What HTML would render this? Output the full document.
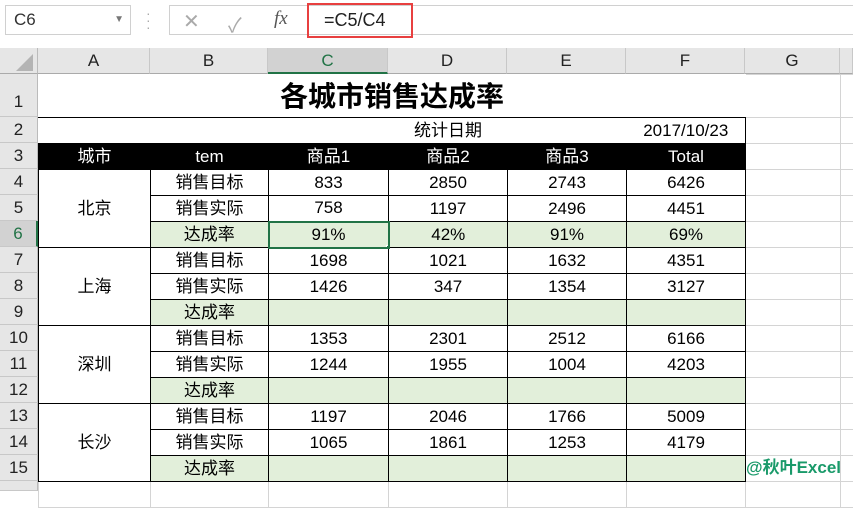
<!DOCTYPE html>
<html><head><meta charset="utf-8"><style>
*{margin:0;padding:0;box-sizing:border-box}
body{width:853px;height:484px;overflow:hidden;background:#fff;position:relative;font-family:"Liberation Sans","Noto Sans CJK SC",sans-serif;color:#000}
.a{position:absolute}
table{border-collapse:collapse;table-layout:fixed;position:absolute;left:38px;top:74px;width:822px}
td{border:1px solid #d4d4d4;text-align:center;font-size:17px;padding:0;height:26px;white-space:nowrap;overflow:hidden;line-height:24px}
td.k{border:1px solid #000}
.h td.k{background:#000;color:#fff;border-color:#000}
.g{background:#e2efda}
.rh{left:0;width:38px;background:#e6e6e6;text-align:center;font-size:17px;color:#222;border-bottom:1px solid #c8c8c8;border-right:1px solid #bbb}
.ch{top:48px;height:26px;background:#e6e6e6;text-align:center;font-size:17px;line-height:26px;color:#222;border-right:1px solid #c8c8c8;border-bottom:1px solid #aaa}
</style></head><body>
<div class="a" style="left:5px;top:5px;width:126px;height:30px;border:1px solid #d0d0d0;font-size:17px;line-height:28px;padding-left:8px;color:#333">C6<span class="a" style="right:6px;top:0;font-size:10px;color:#777">▼</span></div>
<div class="a" style="left:146px;top:10px;color:#aaa;font-size:14px;line-height:7px">·<br>·<br>·</div>
<div class="a" style="left:169px;top:5px;width:684px;height:30px;border:1px solid #d0d0d0;border-right:none"></div>
<div class="a" style="left:183px;top:9px;font-size:20px;color:#aaa">✕</div>
<div class="a" style="left:228px;top:9px;font-size:20px;color:#aaa">✓</div>
<div class="a" style="left:274px;top:8px;font-size:19px;color:#555;font-style:italic;font-family:'Liberation Serif',serif">fx</div>
<div class="a" style="left:307px;top:3px;width:106px;height:35px;border:2px solid #e84040;font-size:18px;line-height:31px;padding-left:15px;color:#222">=C5/C4</div>
<div class="a" style="left:0;top:48px;width:38px;height:26px;background:#e6e6e6;border-right:1px solid #bbb;border-bottom:1px solid #aaa"></div>
<div class="a" style="left:16px;top:54px;width:0;height:0;border-left:17px solid transparent;border-bottom:17px solid #b4b4b4"></div>
<div class="a ch" style="left:38px;width:112px">A</div>
<div class="a ch" style="left:150px;width:118px">B</div>
<div class="a ch" style="left:268px;width:120px;background:#d2d2d2;color:#217346;border-bottom:2px solid #217346">C</div>
<div class="a ch" style="left:388px;width:119px">D</div>
<div class="a ch" style="left:507px;width:119px">E</div>
<div class="a ch" style="left:626px;width:119px">F</div>
<div class="a ch" style="left:745px;width:95px">G</div>
<div class="a ch" style="left:840px;width:13px"></div>
<div class="a rh" style="top:74px;height:43px;line-height:56px">1</div>
<div class="a rh" style="top:117px;height:26px;line-height:26px">2</div>
<div class="a rh" style="top:143px;height:26px;line-height:26px">3</div>
<div class="a rh" style="top:169px;height:26px;line-height:26px">4</div>
<div class="a rh" style="top:195px;height:26px;line-height:26px">5</div>
<div class="a rh" style="top:221px;height:26px;line-height:26px;background:#d2d2d2;color:#217346;border-right:2px solid #217346">6</div>
<div class="a rh" style="top:247px;height:26px;line-height:26px">7</div>
<div class="a rh" style="top:273px;height:26px;line-height:26px">8</div>
<div class="a rh" style="top:299px;height:26px;line-height:26px">9</div>
<div class="a rh" style="top:325px;height:26px;line-height:26px">10</div>
<div class="a rh" style="top:351px;height:26px;line-height:26px">11</div>
<div class="a rh" style="top:377px;height:26px;line-height:26px">12</div>
<div class="a rh" style="top:403px;height:26px;line-height:26px">13</div>
<div class="a rh" style="top:429px;height:26px;line-height:26px">14</div>
<div class="a rh" style="top:455px;height:26px;line-height:26px">15</div>
<div class="a rh" style="top:481px;height:10px"></div>
<table>
<colgroup><col style="width:112px"><col style="width:118px"><col style="width:120px"><col style="width:119px"><col style="width:119px"><col style="width:119px"><col style="width:95px"><col style="width:20px"></colgroup>
<tr><td colspan="6" style="height:43px;border-color:#fff #fff #000 #fff;font-size:28px;font-weight:bold;line-height:40px;padding-top:2px">各城市销售达成率</td><td></td><td></td></tr>
<tr><td class="k" colspan="3" style="border-right:none;border-left-color:#fff"></td><td class="k" style="border-left:none;border-right:none">统计日期</td><td class="k" style="border-left:none;border-right:none"></td><td class="k" style="border-left:none">2017/10/23</td><td></td><td></td></tr>
<tr class="h"><td class="k">城市</td><td class="k">tem</td><td class="k">商品1</td><td class="k">商品2</td><td class="k">商品3</td><td class="k">Total</td><td></td><td></td></tr>
<tr><td class="k" rowspan="3">北京</td><td class="k">销售目标</td><td class="k">833</td><td class="k">2850</td><td class="k">2743</td><td class="k">6426</td><td></td><td></td></tr>
<tr><td class="k">销售实际</td><td class="k">758</td><td class="k">1197</td><td class="k">2496</td><td class="k">4451</td><td></td><td></td></tr>
<tr><td class="k g">达成率</td><td class="k g" style="position:relative;border:2px solid #217346">91%<span class="a" style="right:-4px;bottom:-4px;width:6px;height:6px;background:#217346;border:1px solid #fff"></span></td><td class="k g">42%</td><td class="k g">91%</td><td class="k g">69%</td><td></td><td></td></tr>
<tr><td class="k" rowspan="3">上海</td><td class="k">销售目标</td><td class="k">1698</td><td class="k">1021</td><td class="k">1632</td><td class="k">4351</td><td></td><td></td></tr>
<tr><td class="k">销售实际</td><td class="k">1426</td><td class="k">347</td><td class="k">1354</td><td class="k">3127</td><td></td><td></td></tr>
<tr><td class="k g">达成率</td><td class="k g"></td><td class="k g"></td><td class="k g"></td><td class="k g"></td><td></td><td></td></tr>
<tr><td class="k" rowspan="3">深圳</td><td class="k">销售目标</td><td class="k">1353</td><td class="k">2301</td><td class="k">2512</td><td class="k">6166</td><td></td><td></td></tr>
<tr><td class="k">销售实际</td><td class="k">1244</td><td class="k">1955</td><td class="k">1004</td><td class="k">4203</td><td></td><td></td></tr>
<tr><td class="k g">达成率</td><td class="k g"></td><td class="k g"></td><td class="k g"></td><td class="k g"></td><td></td><td></td></tr>
<tr><td class="k" rowspan="3">长沙</td><td class="k">销售目标</td><td class="k">1197</td><td class="k">2046</td><td class="k">1766</td><td class="k">5009</td><td></td><td></td></tr>
<tr><td class="k">销售实际</td><td class="k">1065</td><td class="k">1861</td><td class="k">1253</td><td class="k">4179</td><td></td><td></td></tr>
<tr><td class="k g">达成率</td><td class="k g"></td><td class="k g"></td><td class="k g"></td><td class="k g"></td><td></td><td></td></tr>
<tr><td></td><td></td><td></td><td></td><td></td><td></td><td></td><td></td></tr>
</table>
<div class="a" style="left:746px;top:456px;font-size:17px;font-weight:bold;color:#1a9a6a;line-height:24px">@秋叶Excel</div>
</body></html>
